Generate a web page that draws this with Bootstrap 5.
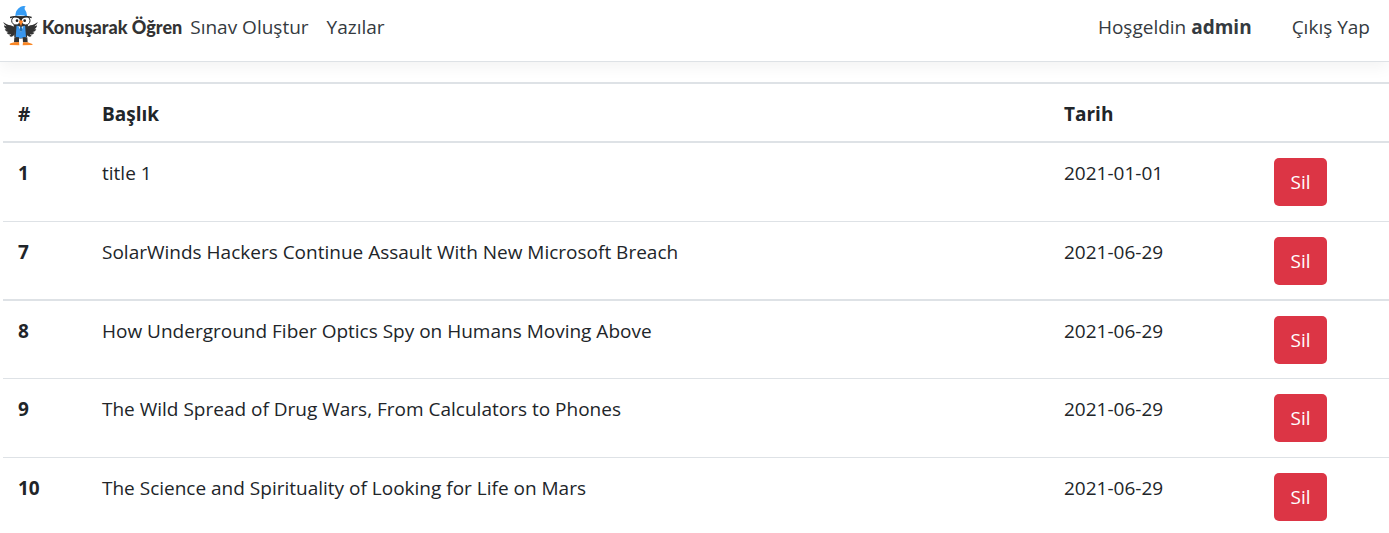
<!DOCTYPE html>
<html lang="tr">
<head>
<meta charset="utf-8">
<meta name="viewport" content="width=device-width, initial-scale=1">
<title>Konuşarak Öğren</title>
<link href="https://cdn.jsdelivr.net/npm/bootstrap@5.3.0/dist/css/bootstrap.min.css" rel="stylesheet">
<style>
body{font-family:"Open Sans","Noto Sans",sans-serif;font-size:19px;line-height:30px;color:#212529;background:#fff;overflow-x:hidden}
.topbar{height:62px;padding:0 19px 7px 3px;border-bottom:1px solid #dee2e6;box-shadow:0 5px 15px rgba(0,0,0,.05)}
.topbar a,.topbar span{color:#343a40;text-decoration:none}
.topbar .logo-text{font-family:Lato,sans-serif;font-weight:900;font-size:18px;line-height:34px;color:#333}
.exam-table{border-collapse:separate;border-spacing:0;table-layout:fixed;margin:20px 0 0 3px;width:calc(100% - 3px);border-top:2px solid #dee2e6}
.exam-table th,.exam-table td{padding:15px 15px 14px;vertical-align:top;border-bottom:1px solid #dee2e6;height:79px}
.exam-table thead th{height:59px;padding:15px 15px 12px;border-bottom-width:2px}
.exam-table .thick>*{border-bottom-width:2px}
.exam-table tbody tr:last-child>*{border-bottom:0}
.col-no{width:84px}.col-date{width:210px}.col-action{width:130px}
.exam-table .btn{display:block;width:53px;height:48px;padding:0;font-size:19px;line-height:48px;border:0;border-radius:5px;background:#dc3545}
.exam-table .row-tight>*{height:78px}
.topbar .site-links{gap:18px}
</style>
</head>
<body>
<header class="topbar d-flex align-items-center justify-content-between">
  <nav class="d-flex align-items-center">
    <a href="#" class="d-flex align-items-center gap-1 me-2">
      <svg class="mb-1" width="35" height="41" viewBox="9 15 105 123" aria-hidden="true">
        <path d="M10 66c6 5 14 9 22 10l12 5v22c-5 8-12 9-16 4 3-1 4-2 5-4-6 1-11-1-13-5l6-2c-6 0-10-3-12-8h6c-5-3-8-7-8-12 3 2 5 3 8 3-5-4-9-8-10-13z" fill="#333"/>
        <path d="M113 66c-6 5-14 9-22 10l-12 5v22c5 8 12 9 16 4-3-1-4-2-5-4 6 1 11-1 13-5l-6-2c6 0 10-3 12-8h-6c5-3 8-7 8-12-3 2-5 3-8 3 5-4 9-8 10-13z" fill="#333"/>
        <path d="M41 74h43l-3 37q-19 9-38 0z" fill="#333"/>
        <path d="M46 48Q46 29 62 20q8-4 15-1-5 4-3 9 7 8 8 22-18-7-36-2z" fill="#359cf5"/>
        <path d="M50 73h25l3 38q-16 7-31 0z" fill="#3996ed"/>
        <path d="M55 77h15l-7 20z" fill="#fff"/><path d="m60 80h5l2 10-4 6-4-6z" fill="#246caa"/>
        <path d="M40 51q22-6 45 0l-4 23-18 7-19-7z" fill="#333"/>
        <circle cx="48" cy="62" r="13" fill="#fff"/><circle cx="77" cy="62" r="13" fill="#fff"/>
        <path d="M30 50q16-4 31 1h3q16-5 31-1v5q-15-5-29 1h-7q-14-6-29-1z" fill="#292929"/>
        <circle cx="48" cy="62" r="13" fill="none" stroke="#292929" stroke-width="3"/><circle cx="77" cy="62" r="13" fill="none" stroke="#292929" stroke-width="3"/>
        <circle cx="51" cy="62" r="4" fill="#222"/><circle cx="74" cy="62" r="4" fill="#222"/>
        <path d="M56 64q6-6 13 0l-6 15z" fill="#ff8327"/>
        <path d="M43 112h14v15H42zm25 0h14l1 15H69z" fill="#333"/>
        <path d="M43 127l-11 3q-6 3-1 5l27 1-1-10zm26 0-1 9 27-1q6-2 0-4l-12-4z" fill="#fa8725"/>
      </svg>
      <span class="logo-text">Konuşarak Öğren</span>
    </a>
    <div class="site-links d-flex">
      <a href="#">Sınav Oluştur</a>
      <a href="#">Yazılar</a>
    </div>
  </nav>
  <div class="d-flex">
    <span class="me-4">Hoşgeldin <strong>admin</strong></span>
    <a href="#" class="ms-3">Çıkış Yap</a>
  </div>
</header>
<main>
  <table class="exam-table">
    <thead><tr><th class="col-no" scope="col">#</th><th scope="col">Başlık</th><th class="col-date" scope="col">Tarih</th><th class="col-action"></th></tr></thead>
    <tbody>
      <tr><th scope="row">1</th><td>title 1</td><td>2021-01-01</td><td><button type="button" class="btn btn-danger">Sil</button></td></tr>
      <tr class="thick"><th scope="row">7</th><td>SolarWinds Hackers Continue Assault With New Microsoft Breach</td><td>2021-06-29</td><td><button type="button" class="btn btn-danger">Sil</button></td></tr>
      <tr class="row-tight"><th scope="row">8</th><td>How Underground Fiber Optics Spy on Humans Moving Above</td><td>2021-06-29</td><td><button type="button" class="btn btn-danger">Sil</button></td></tr>
      <tr><th scope="row">9</th><td>The Wild Spread of Drug Wars, From Calculators to Phones</td><td>2021-06-29</td><td><button type="button" class="btn btn-danger">Sil</button></td></tr>
      <tr><th scope="row">10</th><td>The Science and Spirituality of Looking for Life on Mars</td><td>2021-06-29</td><td><button type="button" class="btn btn-danger">Sil</button></td></tr>
    </tbody>
  </table>
</main>
<script src="https://cdn.jsdelivr.net/npm/bootstrap@5.3.0/dist/js/bootstrap.bundle.min.js"></script>
</body>
</html>
